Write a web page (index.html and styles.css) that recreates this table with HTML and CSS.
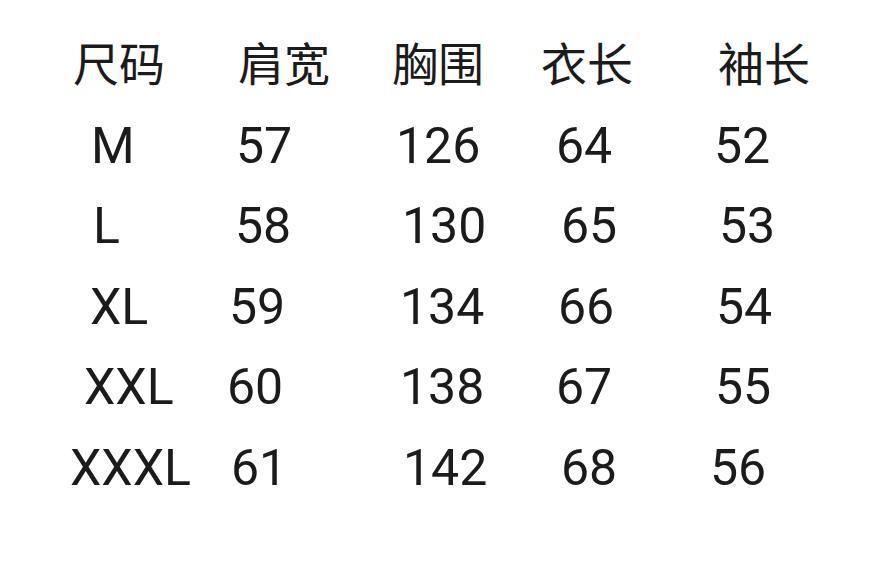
FILE: index.html
```html
<!DOCTYPE html>
<html lang="zh">
<head>
<meta charset="utf-8">
<link rel="stylesheet" href="styles.css">
</head>
<body>
<div class="chart">
  <div class="row head">
    <span class="c p3">尺码</span><span class="c p11">肩宽</span><span class="c p2">胸围</span><span class="c p2">衣长</span><span class="c p8">袖长</span>
  </div>
  <div class="row">
    <span class="c p21">M</span><span class="c p9">57</span><span class="c p6">126</span><span class="c p17">64</span><span class="c p4">52</span>
  </div>
  <div class="row">
    <span class="c p23">L</span><span class="c p8">58</span><span class="c p12">130</span><span class="c p22">65</span><span class="c p9">53</span>
  </div>
  <div class="row">
    <span class="c p20">XL</span><span class="c p2">59</span><span class="c p10">134</span><span class="c p19">66</span><span class="c p6">54</span>
  </div>
  <div class="row">
    <span class="c p14">XXL</span><span class="c p0">60</span><span class="c p10">138</span><span class="c p17">67</span><span class="c p5">55</span>
  </div>
  <div class="row">
    <span class="c p0">XXXL</span><span class="c p4">61</span><span class="c p13">142</span><span class="c p22">68</span><span class="c p0">56</span>
  </div>
</div>
</body>
</html>
```

FILE: styles.css
```css
html, body {
  margin: 0;
  padding: 0;
  background: #ffffff;
}
body {
  width: 872px;
  height: 584px;
  overflow: hidden;
  font-family: Roboto, "Noto Sans CJK SC", sans-serif;
  color: #1b1b1b;
}
.chart {
  padding-top: 25px;
  padding-left: 70px;
}
.row {
  display: grid;
  grid-template-columns: 157px 163px 149px 171px 1fr;
  height: 80.6px;
  line-height: 80.6px;
  font-size: 50px;
  white-space: nowrap;
}
.head {
  font-size: 46px;
}
.c { display: block; }
.p0 { padding-left: 0; }
.p2 { padding-left: 2px; }
.p3 { padding-left: 3px; }
.p4 { padding-left: 4px; }
.p5 { padding-left: 5px; }
.p6 { padding-left: 6px; }
.p8 { padding-left: 8px; }
.p9 { padding-left: 9px; }
.p10 { padding-left: 10px; }
.p11 { padding-left: 11px; }
.p12 { padding-left: 12px; }
.p13 { padding-left: 13px; }
.p14 { padding-left: 14px; }
.p17 { padding-left: 17px; }
.p19 { padding-left: 19px; }
.p20 { padding-left: 20px; }
.p21 { padding-left: 21px; }
.p22 { padding-left: 22px; }
.p23 { padding-left: 23px; }
```
